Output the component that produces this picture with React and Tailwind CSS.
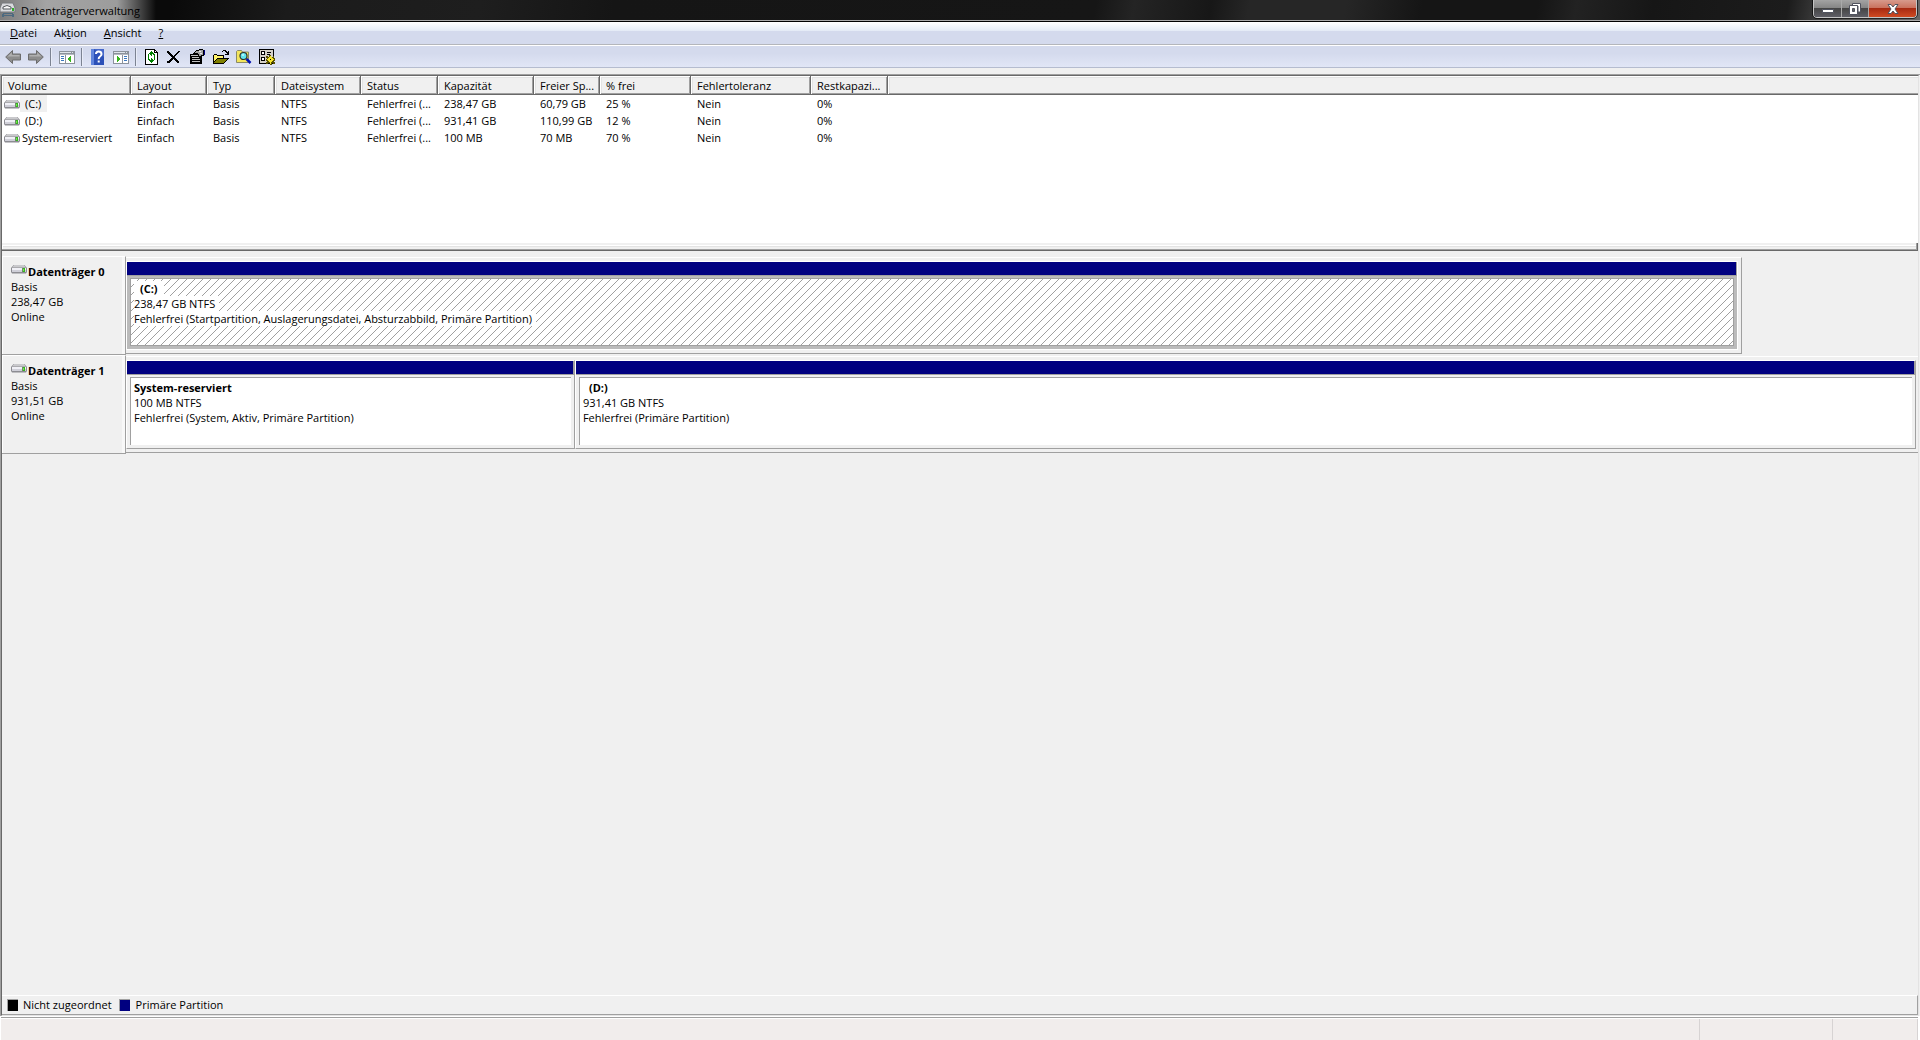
import React from 'react';

const volumes = [
    { name: '(C:)', size: '238,47 GB', free: '60,79 GB', percent: '25 %', selected: true },
    { name: '(D:)', size: '931,41 GB', free: '110,99 GB', percent: '12 %' },
    { name: 'System-reserviert', label: true, size: '100 MB', free: '70 MB', percent: '70 %' },
];

const columns = [
    { title: 'Volume', width: 129 },
    { title: 'Layout', width: 76 },
    { title: 'Typ', width: 68 },
    { title: 'Dateisystem', width: 86 },
    { title: 'Status', width: 77 },
    { title: 'Kapazität', width: 96 },
    { title: 'Freier Speicher', short: 'Freier Sp...', width: 66 },
    { title: '% frei', width: 91 },
    { title: 'Fehlertoleranz', width: 120 },
    { title: 'Restkapazität', short: 'Restkapazi...', width: 77 },
];

const disks = [
    {
        name: 'Datenträger 0',
        size: '238,47 GB',
        width: 90.2,
        partitions: [
            {
                name: '(C:)',
                size: '238,47 GB NTFS',
                status: 'Fehlerfrei (Startpartition, Auslagerungsdatei, Absturzabbild, Primäre Partition)',
                share: 100,
                selected: true,
            },
        ],
    },
    {
        name: 'Datenträger 1',
        size: '931,51 GB',
        width: 100,
        partitions: [
            {
                name: 'System-reserviert',
                label: true,
                size: '100 MB NTFS',
                status: 'Fehlerfrei (System, Aktiv, Primäre Partition)',
                share: 25.08,
            },
            { name: '(D:)', size: '931,41 GB NTFS', status: 'Fehlerfrei (Primäre Partition)', share: 74.92 },
        ],
    },
];

function DriveIcon() {
    return (
        <svg className="w-4 h-[10px] shrink-0" viewBox="0 0 16 10" aria-hidden="true">
            <path d="M2.500 1h11L16 4v4l-1 1.500H1L0 8V4z" fill="#8c8c92" />
            <path d="M3 1h10l2 2.500H1z" fill="#c9c9cc" />
            <path d="M1 4h14v2H1z" fill="#f0f0f6" />
            <path d="M1 6h14v2H1z" fill="#cfcfd8" />
            <path d="M11 4h3v4h-3z" fill="#6d8a6a" />
            <path d="M12 4h2v4h-2z" fill="#37b41f" />
            <path d="M12 5h1v2h-1z" fill="#6fe84a" />
        </svg>
    );
}

function ArrowIcon({ flip }) {
    return (
        <svg className="w-4 h-4" viewBox="0 0 16 16" aria-hidden="true">
            <g transform={flip ? 'matrix(-1 0 0 1 16 0)' : undefined}>
                <path d="M.7 8 7.500 1.500v3.500h8v6h-8v3.500z" fill="#8d8d8d" stroke="#6c6c6c" strokeLinejoin="round" />
                <path d="M2.500 7.500 6.800 3.500v2.500h7.700v1.500z" fill="#b0b0b0" />
            </g>
        </svg>
    );
}

function PaneIcon({ right }) {
    return (
        <svg className="w-4 h-4" viewBox="0 0 16 16" shapeRendering="crispEdges" aria-hidden="true">
            <path d="M0 2h16v13H0z" fill="#8b929c" />
            <path d="M1 5h14v9H1z" fill="#fff" />
            <path d="M1 3h11v1H1zM13 3h1v1h-1z" fill="#dfe4ea" />
            <path d="M1 5h14v1H1z" fill="#b5bac2" />
            {right ? (
                <>
                    <path d="M9 6h1v8H9z" fill="#8b929c" />
                    <path d="M11 7h3v1h-3zM11 9h3v1h-3zM11 11h3v1h-3z" fill="#3c78c0" />
                    <path d="M4 7h1v6H4zM5 8h1v4H5zM6 9h1v2H6z" fill="#35b51d" />
                </>
            ) : (
                <>
                    <path d="M6 6h1v8H6z" fill="#8b929c" />
                    <path d="M2 7h3v1H2zM2 9h3v1H2zM2 11h3v1H2z" fill="#3c78c0" />
                    <path d="M11 7h1v6h-1zM10 8h1v4h-1zM9 9h1v2H9z" fill="#35b51d" />
                </>
            )}
        </svg>
    );
}

function HelpIcon() {
    return (
        <svg className="w-4 h-4" viewBox="0 0 16 16" aria-hidden="true">
            <path d="M1 0h13v16H1z" fill="#2b50b8" />
            <path d="M1 0h3v16H1z" fill="#5f84dc" />
            <path d="M4 0h10v8z" fill="#4568ca" />
            <path d="M6 5q0-2.500 2.700-2.500T11.500 5q0 1.500-1.500 2.500T8.700 10.200" fill="none" stroke="#fff" strokeWidth="2" />
            <path d="M7.700 11.500h2v2h-2z" fill="#fff" />
        </svg>
    );
}

function RefreshIcon() {
    return (
        <svg className="w-4 h-4" viewBox="0 0 16 16" shapeRendering="crispEdges" aria-hidden="true">
            <path d="M1 0h10v1h1v1h1v1h1v13H1z" fill="#000" />
            <path d="M2 1h8v3h3v11H2z" fill="#fff" />
            <path d="M11 2h1v1h-1z" fill="#fff" />
            <path d="M7 2h1v1h1v1h1v1h1v3h-1V6H9V5H8v2H7V6H6V5H5v3H4V5h1V4h1V3h1z" fill="#008000" />
            <path d="M8 14H7v-1H6v-1H5v-1H4V8h1v2h1v1h1V9h1v1h1v1h1V8h1v3h-1v1H9v1H8z" fill="#008000" />
        </svg>
    );
}

function DeleteIcon() {
    return (
        <svg className="w-4 h-4" viewBox="0 0 16 16" shapeRendering="crispEdges" aria-hidden="true">
            <path
                d="M0 2h2v1h1v1h1v1h1v1h1v1h1V6h1V5h1V4h1V3h1V2h2v1h-1v1h-1v1h-1v1h-1v1H8v2h1v1h1v1h1v1h1v2h-2v-1H9v-1H8v-1H7v-1H6v1H5v1H4v1H3v1H0v-2h2v-1h1v-1h1v-1h1V8H4V7H3V6H2V5H1V4H0z"
                fill="#000"
            />
        </svg>
    );
}

function PropertiesIcon() {
    return (
        <svg className="w-4 h-4" viewBox="0 0 16 16" shapeRendering="crispEdges" aria-hidden="true">
            <path d="M0 5h12v10H0z" fill="#000" />
            <path d="M1 6h10v1H1zM2 8h8v1H2zM2 10h8v1H2zM2 12h8v1H2z" fill="#c0c0c0" />
            <path d="M3 4h1V3h1V2h1V1h3V0h4v1h1v6h-2v1h-1v1H9V8H8V6H6V5H3z" fill="#000" />
            <path d="M5 3h1V2h3V1h4v5h-2v1H9V5H8V4H5z" fill="#a4a4a4" />
            <path d="M9 2h2v1H9zM10 4h2v1h-2z" fill="#e8e8e8" />
            <path d="M14 1h1v5h-1z" fill="#000080" />
        </svg>
    );
}

function FolderIcon() {
    return (
        <svg className="w-4 h-4" viewBox="0 0 16 16" shapeRendering="crispEdges" aria-hidden="true">
            <path d="M1 5h3v1h7v3h5v1h-1v1h-1v1h-1v1h-1v1h-1v1H0V6h1z" fill="#000" />
            <path d="M1 6h3v1h6v2H4v1H3v1H2v1H1z" fill="#fff36b" />
            <path d="M4 10h10v1h-1v1h-1v1h-1v1H1v-1h1v-1h1v-1h1z" fill="#808000" />
            <path d="M9 2h1V1h3v1h1v1h1V2h1v4h-4V5h2V4h-1V3h-1V2h-2v1H9z" fill="#000" />
        </svg>
    );
}

function SearchIcon() {
    return (
        <svg className="w-4 h-4" viewBox="0 0 16 16" aria-hidden="true">
            <path d="M.5 13.500v-11l1-1h4l1 1.500h6v10.500z" fill="#f3e55c" stroke="#8a8a66" />
            <circle cx="7.500" cy="7" r="3.500" fill="#5fe4ee" stroke="#2b3030" strokeWidth="1.200" />
            <path d="M6 5.500h2v1H6z" fill="#fff" />
            <path d="M10.500 10l4 4" stroke="#0010b0" strokeWidth="2.500" />
        </svg>
    );
}

function SettingsIcon() {
    return (
        <svg className="w-4 h-4" viewBox="0 0 16 16" shapeRendering="crispEdges" aria-hidden="true">
            <path d="M0 0h15v15H0z" fill="#000" />
            <path d="M1 1h13v13H1z" fill="#d4d0c8" />
            <path d="M2 2h4v4H2zM2 8h4v4H2z" fill="#000" />
            <path d="M3 3h2v2H3zM3 9h2v2H3z" fill="#fff" />
            <path d="M8 3h4v1H8zM8 5h3v1H8z" fill="#000" />
            <path d="M10 6h2v2h2V7h1v2h1v3h-1v1h1v2h-2v-1h-1v2h-2v-2H9v1H7v-2h1v-1H7v-2h1V9H7V7h2v1h1z" fill="#5a5200" />
            <path d="M10 8h3v1h1v3h-1v1h-3v-1H9V9h1zM11 7h1v1h-1zM8 10h1v1H8zM14 10h1v1h-1zM11 13h1v2h-1z" fill="#f5e52c" />
            <path d="M11 10h1v1h-1z" fill="#000" />
        </svg>
    );
}

function ToolButton({ label, children }) {
    return (
        <button type="button" aria-label={label} className="w-[23px] h-5 pl-[3px] flex items-center">
            {children}
        </button>
    );
}

function Separator() {
    return (
        <div className="w-2 h-[18px] pl-[2px]">
            <div className="w-[2px] h-full border-l border-[#7c8392] bg-[#e8ecf8]"></div>
        </div>
    );
}

function TitleBar() {
    return (
        <header className="h-[22px] flex justify-between items-start border-b border-black shadow-[inset_0_-1px_0_#a9a9a9] bg-[linear-gradient(100deg,#0a0a0a_0%,#0a0a0a_9%,#1b1b1b_15%,#1e1e1e_25%,#151515_32%,#161616_57%,#242424_59%,#171717_63%,#262626_65%,#262626_70%,#151515_74%,#151515_80%,#222222_82%,#161616_86%,#1c1c1c_93%,#555555_96%,#666666_100%)]">
            <div className="h-[20px] pr-4 flex items-center gap-[5px] bg-[linear-gradient(90deg,#7d7d7d_0%,#a4a4a4_30%,#9c9c9c_75%,transparent_100%)]">
                <svg className="w-4 h-4" viewBox="0 0 16 16" aria-hidden="true">
                    <path d="M2 1h11l2 5v4H0V6z" fill="#d9dadd" stroke="#77797d" />
                    <path d="M3 5q4-3 8 0v2H3z" fill="#fafafa" stroke="#55585c" />
                    <path d="M12 6h2v3h-2z" fill="#2fae2a" />
                    <path d="M3 11h10v1H3zM2 12h2v3H2zM12 12h2v3h-2zM4 13h8v1H4z" fill="#4d6a80" />
                </svg>
                <h1 className="pt-[2px] text-black">Datenträgerverwaltung</h1>
            </div>
            <div className="h-[18px] mr-[3px] flex rounded-b-[4px] border border-t-0 border-[#c4c4c4] outline-1 outline-black/60 overflow-hidden">
                <button type="button" aria-label="Minimieren" className="w-7 flex items-center justify-center pt-1 border-r border-[#aaaaaa] bg-[linear-gradient(#a3a3a3_0%,#848484_48%,#454545_50%,#5e5e66_100%)]">
                    <svg className="w-3 h-1" viewBox="0 0 12 4" aria-hidden="true">
                        <path d="M.5.5h11v3H.5z" fill="#fff" stroke="#50535f" />
                    </svg>
                </button>
                <button type="button" aria-label="Verkleinern" className="w-[27px] flex items-center justify-center border-r border-[#aaaaaa] bg-[linear-gradient(#a3a3a3_0%,#848484_48%,#454545_50%,#5e5e66_100%)]">
                    <svg className="w-3 h-3" viewBox="0 0 12 12" aria-hidden="true">
                        <path d="M3.500.5h8V9H9V3H3.500z" fill="#fff" stroke="#50535f" />
                        <path d="M.5 2.500h8v9h-8z" fill="#fff" stroke="#50535f" />
                        <path d="M3.500 5.500h2v3h-2z" fill="#666" stroke="#50535f" />
                    </svg>
                </button>
                <button type="button" aria-label="Schließen" className="w-[47px] flex items-center justify-center bg-[linear-gradient(#d79a8c_0%,#c9705c_48%,#a72a12_50%,#cf4a22_100%)]">
                    <svg className="w-3 h-3" viewBox="0 0 12 12" aria-hidden="true">
                        <path d="M1 1.500h3l2 2.500 2-2.500h3L8 6l3 4.500H8L6 8l-2 2.500H1L4 6z" fill="#fff" stroke="#50535f" />
                    </svg>
                </button>
            </div>
        </header>
    );
}

function MenuBar() {
    return (
        <nav className="h-[23px] pl-[2px] flex items-center gap-px border-b border-[#b4b6bb] bg-[linear-gradient(#ffffff_0%,#e4ebf6_40%,#d4daed_42%,#d4daed_100%)]">
            <button type="button" className="px-2"><u>D</u>atei</button>
            <button type="button" className="px-2">Ak<u>t</u>ion</button>
            <button type="button" className="px-2"><u>A</u>nsicht</button>
            <button type="button" className="px-2"><u>?</u></button>
        </nav>
    );
}

function ToolBar() {
    return (
        <div className="h-[23px] pl-[2px] flex items-center border-t border-b border-t-white border-b-[#b5bccf] bg-[linear-gradient(#d4daed_0%,#d4daed_35%,#e1e6f6_100%)]">
            <ToolButton label="Zurück"><ArrowIcon /></ToolButton>
            <ToolButton label="Vorwärts"><ArrowIcon flip /></ToolButton>
            <Separator />
            <ToolButton label="Konsolenstruktur"><PaneIcon /></ToolButton>
            <Separator />
            <ToolButton label="Hilfe"><HelpIcon /></ToolButton>
            <ToolButton label="Aktionsbereich"><PaneIcon right /></ToolButton>
            <Separator />
            <ToolButton label="Aktualisieren"><RefreshIcon /></ToolButton>
            <ToolButton label="Löschen"><DeleteIcon /></ToolButton>
            <ToolButton label="Eigenschaften"><PropertiesIcon /></ToolButton>
            <ToolButton label="Öffnen"><FolderIcon /></ToolButton>
            <ToolButton label="Suchen"><SearchIcon /></ToolButton>
            <ToolButton label="Einstellungen"><SettingsIcon /></ToolButton>
        </div>
    );
}

const headCell =
    'h-[19px] p-0 pl-[6px] text-left font-normal whitespace-nowrap overflow-hidden bg-[#f0f0f0] shadow-[inset_-1px_-1px_0_#696969,inset_1px_1px_0_#ffffff,inset_-2px_-2px_0_#a0a0a0,inset_2px_2px_0_#e3e3e3]';

function VolumeTable() {
    return (
        <div className="h-[167px] bg-white">
            <table className="w-full table-fixed border-collapse">
                <colgroup>
                    {columns.map((col) => (
                        <col key={col.title} style={{ width: col.width }} />
                    ))}
                    <col />
                </colgroup>
                <thead>
                    <tr>
                        {columns.map((col) => (
                            <th key={col.title} scope="col" title={col.title} className={headCell}>
                                {col.short ?? col.title}
                            </th>
                        ))}
                        <td className="bg-[#f0f0f0] shadow-[inset_0_-1px_0_#696969,inset_1px_1px_0_#ffffff,inset_0_-2px_0_#a0a0a0,inset_2px_2px_0_#e3e3e3]"></td>
                    </tr>
                </thead>
                <tbody>
                    {volumes.map((vol) => (
                        <tr key={vol.name} className="h-[17px] whitespace-nowrap">
                            <td className="p-0">
                                <div className="flex items-center pl-[2px]">
                                    <DriveIcon />
                                    <span
                                        className={`h-[17px] leading-[17px] ${vol.label ? 'pl-[2px]' : 'pl-[5px] pr-[6px]'} ${
                                            vol.selected ? 'bg-[#f0f0f0]' : ''
                                        }`}
                                    >
                                        {vol.name}
                                    </span>
                                </div>
                            </td>
                            <td className="p-0 pl-[6px]">Einfach</td>
                            <td className="p-0 pl-[6px]">Basis</td>
                            <td className="p-0 pl-[6px]">NTFS</td>
                            <td className="p-0 pl-[6px]">Fehlerfrei (...</td>
                            <td className="p-0 pl-[6px]">{vol.size}</td>
                            <td className="p-0 pl-[6px]">{vol.free}</td>
                            <td className="p-0 pl-[6px]">{vol.percent}</td>
                            <td className="p-0 pl-[6px]">Nein</td>
                            <td className="p-0 pl-[6px]">0%</td>
                            <td className="p-0"></td>
                        </tr>
                    ))}
                </tbody>
            </table>
        </div>
    );
}

function Hatch() {
    return (
        <svg className="absolute inset-0 w-full h-full" shapeRendering="crispEdges" aria-hidden="true">
            <defs>
                <pattern id="hatch" width="8" height="8" patternUnits="userSpaceOnUse">
                    <path
                        d="M7 0h1v1H7zM6 1h1v1H6zM5 2h1v1H5zM4 3h1v1H4zM3 4h1v1H3zM2 5h1v1H2zM1 6h1v1H1zM0 7h1v1H0z"
                        fill="#a0a0a0"
                    />
                </pattern>
            </defs>
            <rect width="100%" height="100%" fill="url(#hatch)" />
        </svg>
    );
}

function Partition({ part }) {
    const selected = part.selected;
    return (
        <div
            className={`flex flex-col min-w-0 border border-t-white border-l-white ${
                selected ? 'border-r-white border-b-white' : 'border-r-[#a0a0a0] border-b-[#a0a0a0]'
            }`}
            style={{ width: `${part.share}%` }}
        >
            <div className="h-[14px] bg-[#000080] border-r border-b border-[#a0a0a0]"></div>
            <div className={`flex-1 flex px-[3px] pt-[2px] pb-[3px] ${selected ? 'bg-[#bbbbbb]' : 'bg-[#f0f0f0]'}`}>
                <div
                    className={`relative flex-1 min-w-0 pl-[3px] pt-[2px] bg-white border-t border-l border-[#a0a0a0] ${
                        selected ? 'border-r border-b' : ''
                    }`}
                >
                    {selected && <Hatch />}
                    <div className="relative flex flex-col items-start leading-[15px] whitespace-nowrap">
                        <strong className={`bg-white ${part.label ? '' : 'px-[6px]'}`}>{part.name}</strong>
                        <span className="bg-white pr-1">{part.size}</span>
                        <span className="bg-white pr-1">{part.status}</span>
                    </div>
                </div>
            </div>
        </div>
    );
}

function DiskRow({ disk }) {
    return (
        <section className="h-[99px] flex">
            <div className="w-[124px] shrink-0 pl-[9px] pt-[7px] border-t border-r border-b border-t-white border-[#a0a0a0] shadow-[inset_-3px_0_0_#f8f8f8,inset_1px_0_0_#ffffff] leading-[15px]">
                <div className="flex items-start">
                    <DriveIcon />
                    <h2 className="pl-px font-bold">{disk.name}</h2>
                </div>
                <p>Basis</p>
                <p>{disk.size}</p>
                <p>Online</p>
            </div>
            <div className="flex-1 min-w-0 pt-px pb-px">
                <div
                    className={`h-full flex pt-[3px] pb-[3px] border-t border-b border-t-white border-b-[#a0a0a0] ${
                        disk.width < 100 ? 'border-r border-r-[#a0a0a0] pr-[3px]' : 'pr-[2px]'
                    }`}
                    style={{ width: `${disk.width}%` }}
                >
                    {disk.partitions.map((part) => (
                        <Partition key={part.name} part={part} />
                    ))}
                </div>
            </div>
        </section>
    );
}

function Legend() {
    return (
        <div className="h-5 pl-[5px] flex items-center border-t border-r border-b border-t-white border-[#a0a0a0]">
            <span className="w-[11px] h-3 mr-[5px] bg-black border-t border-l border-[#a0a0a0]"></span>
            Nicht zugeordnet
            <span className="w-[11px] h-3 ml-[7px] mr-[6px] bg-[#000080] border-t border-l border-[#a0a0a0]"></span>
            Primäre Partition
        </div>
    );
}

export default function App() {
    return (
        <div className="min-h-screen flex flex-col bg-[#f0f0f0] text-black text-[11px] leading-4 font-['Open_Sans','Noto_Sans',sans-serif] cursor-default">
            <TitleBar />
            <MenuBar />
            <ToolBar />
            <main className="flex-1 mt-[6px] flex flex-col border-t border-l border-[#a0a0a0]">
                <div className="flex-1 flex flex-col mr-px border-t border-l border-r border-b border-t-[#696969] border-l-[#696969] border-r-[#e3e3e3] border-b-[#e3e3e3]">
                    <VolumeTable />
                    <div className="h-2 mb-[5px] bg-[#f0f0f0] shadow-[inset_-1px_-1px_0_#696969,inset_-2px_-2px_0_#a0a0a0,inset_0_2px_0_#f0f0f0,inset_1px_3px_0_#ffffff,inset_1px_4px_0_#e3e3e3]"></div>
                    <div className="flex-1">
                        {disks.map((disk) => (
                            <DiskRow key={disk.name} disk={disk} />
                        ))}
                    </div>
                    <Legend />
                </div>
            </main>
            <footer className="h-6 shrink-0 pl-px pr-[2px] pt-px bg-white">
                <div className="h-[2px] border-t border-[#a0a0a0]"></div>
                <div className="h-[21px] flex justify-end bg-[#f1edec]">
                    <div className="w-[133px] border-l border-[#d7d3d3]"></div>
                    <div className="w-[86px] border-l border-r border-[#d7d3d3]"></div>
                </div>
            </footer>
        </div>
    );
}
